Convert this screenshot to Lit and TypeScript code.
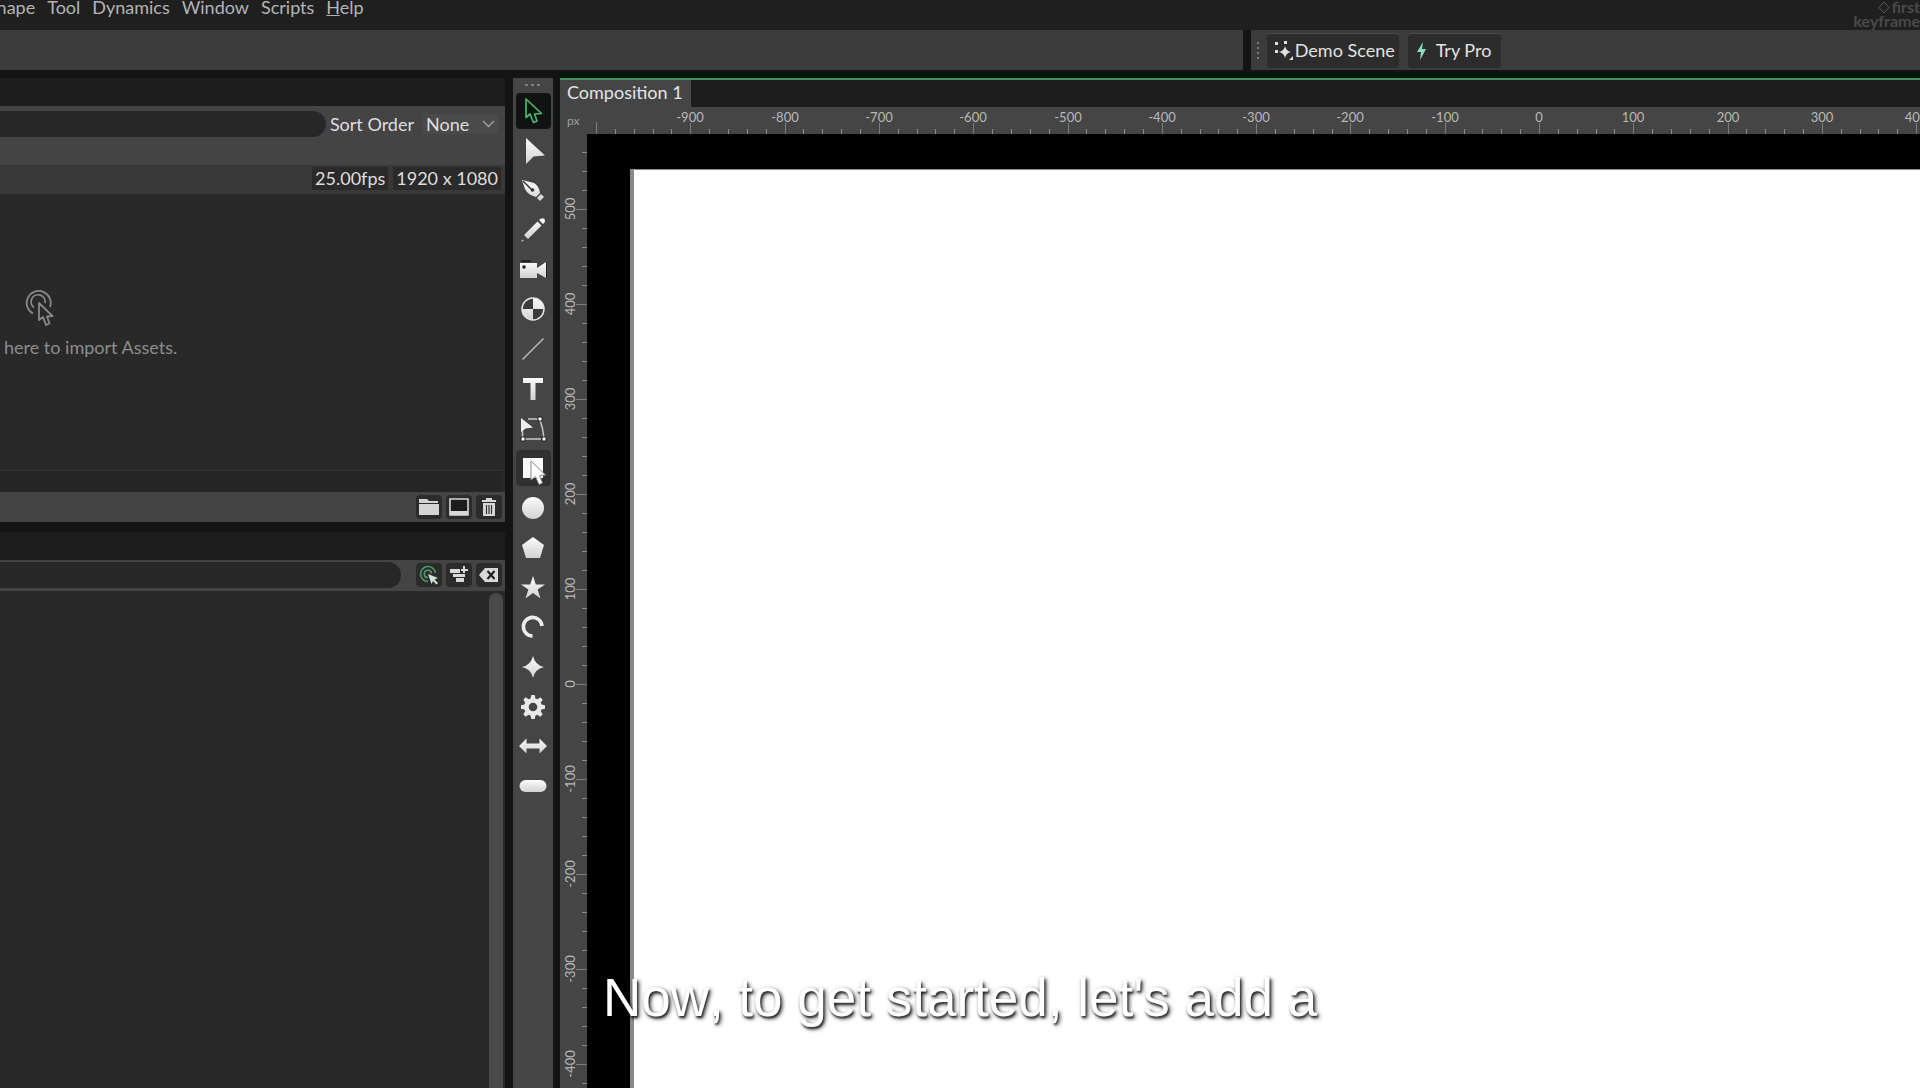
import { LitElement, html, svg, css } from "lit";
import { customElement, property } from "lit/decorators.js";

const FILL = "url(#shade)";

const shade = svg`<defs>
  <linearGradient id="shade" x1="0" y1="0" x2="0" y2="1">
    <stop offset="0" stop-color="#fbfbfb" />
    <stop offset="1" stop-color="#d2d2d2" />
  </linearGradient>
</defs>`;

const tools = [
  { name: "Select", active: true, art: svg`<path d="M7 2 L7 20.5 L11 17 L14.5 25.5 L18 24 L15.5 17 L22.5 16.5 Z" fill="#06170c" stroke="#4fb374" stroke-width="1.7" stroke-linejoin="round"/>` },
  { name: "Edit Shape", art: svg`<path d="M7 1 V27 L14.5 19.5 L26 18.5 Z" fill=${FILL}/>` },
  { name: "Pen", art: svg`<path d="M3 4 L15 7 Q20 10 21 17 L17 21 Q9 19 6 13 Z M18 22 L22 18 L25 21 L21 25 Z" fill=${FILL}/><path d="M4 5 L13 14" stroke="#333" stroke-width="1.4"/><circle cx="13.5" cy="14" r="1.8" fill="#333"/>` },
  { name: "Pencil", art: svg`<path d="M18.500 5.5 L22.5 9.5 L9 23 L5 19 Z M20 4 Q23 1 25.500 3 Q27 6 24 8 Z" fill=${FILL}/><path d="M2 25.5 L3.5 23.5 L5 25 Z" fill="#ccc"/>` },
  { name: "Camera", art: svg`<path d="M1 7 H18 V12 L27 6 V22 L18 17 V22 H1 Z" fill=${FILL}/><path d="M2 5 H12 M28 6 V22" stroke="#222" stroke-width="2"/><circle cx="5" cy="11" r="1.8" fill="#222"/>` },
  { name: "Null", art: svg`<circle cx="14" cy="14" r="11" fill="#3b3b3b"/><path d="M14 14 V3 A11 11 0 0 1 25 14 Z M14 14 V25 A11 11 0 0 1 3 14 Z" fill=${FILL}/><circle cx="14" cy="14" r="11" fill="none" stroke="#e4e4e4" stroke-width="1.5"/>` },
  { name: "Line", art: svg`<path d="M3.5 24.5 L24.5 3.5" stroke="#b8b8b8" stroke-width="1.6"/>` },
  { name: "Text", art: svg`<path d="M4 3 H24 V8 H16.5 V25 H11.5 V8 H4 Z" fill=${FILL}/>` },
  { name: "Transform", art: svg`<path d="M9 4 H20 M21 5 Q24 13 25 23 M6 24 H22 M3.5 10 V22" fill="none" stroke="#c9c9c9" stroke-width="1.5"/><path d="M2 3 V17 L6.5 13.5 L14 12.5 Z" fill="#eee"/><path d="M19 2 H23 V6 H19 Z M23 22 H27 V26 H23 Z M2 22 H6 V26 H2 Z" fill="#fff" stroke="#222" stroke-width="1"/>` },
  { name: "Rectangle", hover: true, art: svg`<path d="M4 4 H24 V24 H4 Z" fill="#fafafa"/>` },
  { name: "Ellipse", art: svg`<circle cx="14" cy="14" r="11" fill=${FILL}/>` },
  { name: "Polygon", art: svg`<path d="M14 3 L25 11 L21 24 H7 L3 11 Z" fill=${FILL}/>` },
  { name: "Star", art: svg`<path d="M14 2 L16.8 10.5 H26 L18.6 15.6 L21.5 24.5 L14 19 L6.5 24.5 L9.4 15.6 L2 10.5 H11.2 Z" fill=${FILL}/>` },
  { name: "Arc", art: svg`<path d="M13.5 23 A9.3 9.3 0 1 1 23 13" fill="none" stroke="#ececec" stroke-width="3.6"/>` },
  { name: "Super Ellipse", art: svg`<path d="M14 3 Q16 12 25 14 Q16 16 14 25 Q12 16 3 14 Q12 12 14 3 Z" fill=${FILL}/>` },
  { name: "Cogwheel", art: svg`<g fill="#e9e9e9"><path d="M12.3 2 H15.7 L16.7 7 H11.3 Z"/>${[45, 90, 135, 180, 225, 270, 315].map((a) => svg`<path d="M12.3 2 H15.7 L16.7 7 H11.3 Z" transform="rotate(${a} 14 14)"/>`)}</g><circle cx="14" cy="14" r="6.6" fill="none" stroke="#e9e9e9" stroke-width="4.6"/>` },
  { name: "Arrow", art: svg`<path d="M0 14 L7.5 6.5 V11.5 H20.5 V6.5 L28 14 L20.5 21.5 V16.5 H7.5 V21.5 Z" fill=${FILL}/>` },
  { name: "Capsule", art: svg`<rect x="0.5" y="8" width="27" height="12" rx="6" fill=${FILL}/>` },
];

@customElement("canvas-ruler")
class CanvasRuler extends LitElement {
  @property() axis = "x";
  @property({ type: Number }) origin = 0;
  @property({ type: Number }) scale = 1;

  static styles = css`
    :host { display: block; overflow: hidden; background: #454545; }
    svg { display: block; width: 100%; height: 100%; }
    .label { font: 13px Lato, "Liberation Sans", sans-serif; fill: #b9b9b9; text-anchor: middle; }
    .major { fill: #7d7d7d; }
    .minor { fill: #8a8a8a; }
  `;

  render() {
    const horizontal = this.axis === "x";
    const marks = [];
    for (let v = -1000; v <= 1000; v += 20) {
      const at = Math.round(this.origin + (horizontal ? v : -v) * this.scale);
      if (at < -20) continue;
      const major = v % 100 === 0;
      const start = v === -1000 ? 15 : major ? 16 : 22;
      const cls = major ? "major" : "minor";
      marks.push(
        horizontal
          ? svg`<rect class=${cls} x=${at} y=${start} width="1" height=${27 - start} />`
          : svg`<rect class=${cls} x=${start} y=${at} width=${27 - start} height="1" />`,
      );
      if (major && v !== -1000) {
        marks.push(
          horizontal
            ? svg`<text class="label" x=${at} y="15">${v}</text>`
            : svg`<text class="label" transform="translate(15 ${at}) rotate(-90)">${v}</text>`,
        );
      }
    }
    return html`<svg aria-hidden="true">${marks}</svg>`;
  }
}

@customElement("app-root")
class AppRoot extends LitElement {
  static styles = css`
    :host { display: block; }
    * { box-sizing: border-box; }
    button, input, select { font: inherit; color: inherit; border: 0; margin: 0; padding: 0; }
    svg { display: block; }
    .app {
      position: relative; height: 100vh; overflow: hidden;
      display: grid; grid-template-rows: 30px 40px minmax(0, 1fr);
      background: #141414; color: #dedede;
      font: 18px/24px Lato, "Liberation Sans", sans-serif;
    }
    .menubar { display: flex; justify-content: space-between; background: #1f1f20; }
    .menus { display: flex; gap: 12px; margin-left: -13px; line-height: 14px; color: #b4b4b4; }
    .menus a { color: inherit; text-decoration: none; }
    .brand { display: flex; flex-direction: column; align-items: flex-end; color: #4a4a4a; font-size: 16px; font-weight: 700; line-height: 14px; }
    .brand-row { display: flex; align-items: center; gap: 1px; }
    .bars { display: grid; grid-template-columns: minmax(0, 65fr) 8px minmax(0, 35fr); }
    .bar { background: #3b3b3b; display: flex; align-items: center; padding-left: 5px; }
    .bar.right { grid-column: 3; }
    .grip { margin-right: 7px; }
    .action { display: flex; align-items: center; height: 35px; border-radius: 4px; background: #2c2c2c; border-top: 1px solid #4c4c4c; padding: 0 4px 2px 7px; gap: 1px; color: #e2e2e2; }
    .action.pro { margin-left: 9px; padding: 0 10px 2px 7px; gap: 8px; }
    .work { display: grid; grid-template-columns: 505px 40px minmax(0, 1fr); column-gap: 8px; padding-top: 8px; min-height: 0; }
    .side { display: grid; grid-template-rows: minmax(0, 4fr) minmax(0, 5fr); row-gap: 10px; min-height: 0; }
    .panel { display: flex; flex-direction: column; min-height: 0; background: #292929; }
    .strip { height: 28px; background: #1d1d1d; flex: none; }
    .filter { display: flex; align-items: center; background: #444; height: 32px; padding: 4px 7px 0 0; flex: none; }
    .filter.options { padding: 0 3px 2px 0; height: 31px; }
    .search { flex: 1; min-width: 0; height: 26px; background: #272727; border-radius: 0 13px 13px 0; padding: 0 12px; outline: none; }
    .sort-label { margin: 0 9px 0 4px; }
    .sort { display: grid; align-items: center; width: 75px; height: 20px; background: #4a4a4a; }
    .sort select { grid-area: 1 / 1; appearance: none; background: none; width: 100%; height: 20px; padding: 0 3px; outline: none; line-height: 20px; }
    .sort svg { grid-area: 1 / 1; justify-self: end; margin-right: 3px; pointer-events: none; }
    .columns { height: 27px; background: #444; flex: none; }
    .info { height: 29px; display: flex; align-items: center; justify-content: flex-end; gap: 5px; background: #383838; padding: 0 4px 2px 0; flex: none; }
    .info span { background: #2a2a2a; padding: 0 3px; line-height: 23px; }
    .drop { flex: 1; min-height: 0; display: flex; flex-direction: column; justify-content: center; gap: 8px; padding: 0 0 16px 4px; color: #8d8d8d; background: #292929; }
    .drop svg { margin-left: 21px; }
    .scroll { height: 22px; background: #252525; border-top: 1px solid #333; margin-right: 3px; flex: none; }
    .foot { height: 30px; background: #444; display: flex; align-items: center; justify-content: flex-end; gap: 4px; padding-right: 3px; flex: none; }
    .small { width: 26px; height: 24px; border-radius: 4px; background: #2b2b2b; display: grid; place-items: center; flex: none; }
    .gap { width: 15px; flex: none; }
    .buttons { display: flex; gap: 4px; }
    .props { flex: 1; min-height: 0; display: flex; justify-content: flex-end; padding: 2px 2px 0 0; }
    .thumb { width: 14px; background: #494949; border-radius: 7px 7px 0 0; }
    .tools { background: #454545; display: flex; flex-direction: column; align-items: center; min-height: 0; }
    .dots { margin-top: 5px; flex: none; }
    .tool-list { display: grid; grid-auto-rows: 1fr; place-items: center; height: 715px; margin-top: 4px; flex: none; }
    .tool { width: 35px; height: 36px; border-radius: 4px; background: none; display: grid; place-items: center; }
    .tool.active { background: #101311; }
    .tool.hover { background: #303030; position: relative; }
    .cursor { position: absolute; left: 13px; top: 9px; }
    .stage { display: grid; grid-template-rows: 29px 27px minmax(0, 1fr); grid-template-columns: 27px minmax(0, 1fr); margin-left: -1px; min-height: 0; }
    .tabs { grid-column: 1 / 3; background: #1d1d1d; border-top: 2px solid #4a9262; box-shadow: 0 -6px #06180c; display: flex; }
    .tab { background: #454545; color: #e4e4e4; width: 131px; text-align: left; padding: 0 0 4px 7px; white-space: nowrap; line-height: 22px; }
    .unit { background: #454545; color: #a0a0a0; font-size: 12px; line-height: 27px; padding-left: 7px; }
    .viewport { background: #000; padding: 35px 0 0 43px; min-height: 0; }
    .canvas { height: 100%; background: #fff; border-top: 1px solid #8c8c8c; border-left: 4px solid #898989; }
    .caption {
      position: absolute; left: 0; right: 0; bottom: 60px; margin: 0; text-align: center; color: #fff;
      font: 53px/60px "Liberation Sans", Arial, sans-serif; font-kerning: none; text-shadow: 2px 2px 4px #000c, 1px 2px 2px #0009;
    }
  `;

  render() {
    return html`
      <div class="app">
        <header class="menubar">
          <nav class="menus">
            <a href="#shape">Shape</a><a href="#tool">Tool</a><a href="#dynamics">Dynamics</a>
            <a href="#window">Window</a><a href="#scripts">Scripts</a><a href="#help"><u>H</u>elp</a>
          </nav>
          <div class="brand">
            <span class="brand-row">
              <svg width="12" height="14" viewBox="0 0 12 14"><path d="M6 2 L11 7.5 L6 13 L1 7.5 Z" fill="none" stroke="#5c5c5c" /></svg>first
            </span>
            <span>keyframe</span>
          </div>
        </header>

        <div class="bars">
          <div class="bar"></div>
          <div class="bar right">
            <svg class="grip" width="4" height="18" viewBox="0 0 4 18" fill="#787878"><path d="M1 1h2v2H1z M1 6h2v2H1z M1 11h2v2H1z M1 16h2v2H1z" /></svg>
            <button class="action">
              <svg width="20" height="24" viewBox="0 0 20 24" fill="#e0e0e0"><path d="M11 8 Q12 13 17 14 Q12 15 11 20 Q10 15 5 14 Q10 13 11 8 Z M1 4h3v3H1z M10 3h3v3h-3z M1 12h3v3H1z M15 22l4-4v4z" /></svg>
              Demo Scene
            </button>
            <button class="action pro">
              <svg width="13" height="24" viewBox="0 0 13 24"><path d="M8 4 L2 14 H6 L5 22 L11 11 H7 Z" fill="#8fd8c2" /></svg>
              Try Pro
            </button>
          </div>
        </div>

        <main class="work">
          <div class="side">
            <section class="panel">
              <div class="strip"></div>
              <div class="filter">
                <input class="search" type="search" aria-label="Search assets" />
                <label class="sort-label" for="sort">Sort Order</label>
                <span class="sort">
                  <select id="sort"><option>None</option></select>
                  <svg width="13" height="8" viewBox="0 0 13 8"><path d="M1 1 L6.5 6.5 L12 1" fill="none" stroke="#a4a4a4" stroke-width="1.3" /></svg>
                </span>
              </div>
              <div class="columns"></div>
              <div class="info"><span>25.00fps</span><span>1920 x 1080</span></div>
              <div class="drop">
                <svg width="30" height="38" viewBox="0 0 30 38" fill="none" stroke="#8a8a8a" stroke-width="1.8">
                  <path d="M8 24.5 A12 12 0 1 1 25 18" /><path d="M9 18.5 A7 7 0 1 1 20 14" />
                  <path d="M14 14 V31 L18 28 L21 36 L24.5 34.5 L22 27.5 L27.5 27 Z" fill="#292929" stroke-linejoin="round" />
                </svg>
                <span>here to import Assets.</span>
              </div>
              <div class="scroll"></div>
              <div class="foot">
                <button class="small" aria-label="New folder">
                  <svg width="20" height="18" viewBox="0 0 20 18" fill="#d4d4d4"><path d="M0 1 H8 L10 3 H19 V5 H0 Z M0 6 H20 V17 H0 Z" /></svg>
                </button>
                <button class="small" aria-label="New composition">
                  <svg width="20" height="18" viewBox="0 0 20 18"><path d="M1 1 H19 V17 H1 Z" fill="#1c1c1c" stroke="#d8d8d8" stroke-width="1.6" /><path d="M1 13 H19 V17 H1 Z" fill="#d8d8d8" /></svg>
                </button>
                <button class="small" aria-label="Delete">
                  <svg width="16" height="20" viewBox="0 0 16 20" fill="#d8d8d8"><path d="M1 3 H5 V1 H11 V3 H15 V5 H1 Z M2 6 H14 V19 H2 Z" /><path d="M5.5 8 V17 M8 8 V17 M10.5 8 V17" stroke="#333" stroke-width="1.2" /></svg>
                </button>
              </div>
            </section>

            <section class="panel">
              <div class="strip"></div>
              <div class="filter options">
                <input class="search" type="search" aria-label="Search attributes" />
                <span class="gap"></span>
                <div class="buttons">
                  <button class="small" aria-label="Show selected">
                    <svg width="20" height="20" viewBox="0 0 20 20" fill="none" stroke="#4f9a6c" stroke-width="1.6"><path d="M9 16.5 A7.5 7.5 0 1 1 16.5 8" /><path d="M9 12.5 A3.6 3.6 0 1 1 12.5 8.5" /><path d="M9 9 L19 13 L15.5 14.5 L19 18 L17.5 19.5 L14 16 L12.5 19 Z" fill="#d5e2d9" stroke="none" /></svg>
                  </button>
                  <button class="small" aria-label="Add attribute">
                    <svg width="20" height="20" viewBox="0 0 20 20" fill="#d8d8d8"><path d="M1 4 H11 V8 H1 Z M4 9 H16 V12 H4 Z M7 13 H15 V17 H7 Z M14 4 V1 H16 V4 H19 V6 H16 V8 H14 V6 H12 V4 Z" /></svg>
                  </button>
                  <button class="small" aria-label="Clear">
                    <svg width="20" height="16" viewBox="0 0 20 16"><path d="M0 8 L6 1 H19 V15 H6 Z" fill="#d8d8d8" /><path d="M8.5 4 L15.5 12 M15.5 4 L8.5 12" stroke="#1d1d1d" stroke-width="2" /></svg>
                  </button>
                </div>
              </div>
              <div class="props"><div class="thumb"></div></div>
            </section>
          </div>

          <aside class="tools">
            <svg class="dots" width="18" height="4" viewBox="0 0 18 4" fill="#808080"><path d="M1 1h3v2H1z M7 1h3v2H7z M13 1h3v2h-3z" /></svg>
            <div class="tool-list">
              ${tools.map(
                (t) => html`<button class="tool ${t.active ? "active" : ""} ${t.hover ? "hover" : ""}" aria-label=${t.name}>
                  <svg width="28" height="28" viewBox="0 0 28 28">${shade}${t.art}</svg>
                  ${t.hover
                    ? html`<svg class="cursor" width="20" height="28" viewBox="0 0 20 28"><path d="M2 2 V21 L6.5 17.5 L10 25.5 L13.5 24 L10.5 16.5 L16.5 16 Z" fill="#fff" stroke="#8a8a8a" stroke-width="1" /></svg>`
                    : ""}
                </button>`,
              )}
            </div>
          </aside>

          <section class="stage">
            <div class="tabs"><button class="tab">Composition 1</button></div>
            <div class="unit">px</div>
            <canvas-ruler axis="x" origin="952" scale="0.943"></canvas-ruler>
            <canvas-ruler axis="y" origin="550" scale="0.95"></canvas-ruler>
            <div class="viewport"><div class="canvas"></div></div>
          </section>
        </main>

        <p class="caption">Now, to get started, let's add a</p>
      </div>
    `;
  }
}
